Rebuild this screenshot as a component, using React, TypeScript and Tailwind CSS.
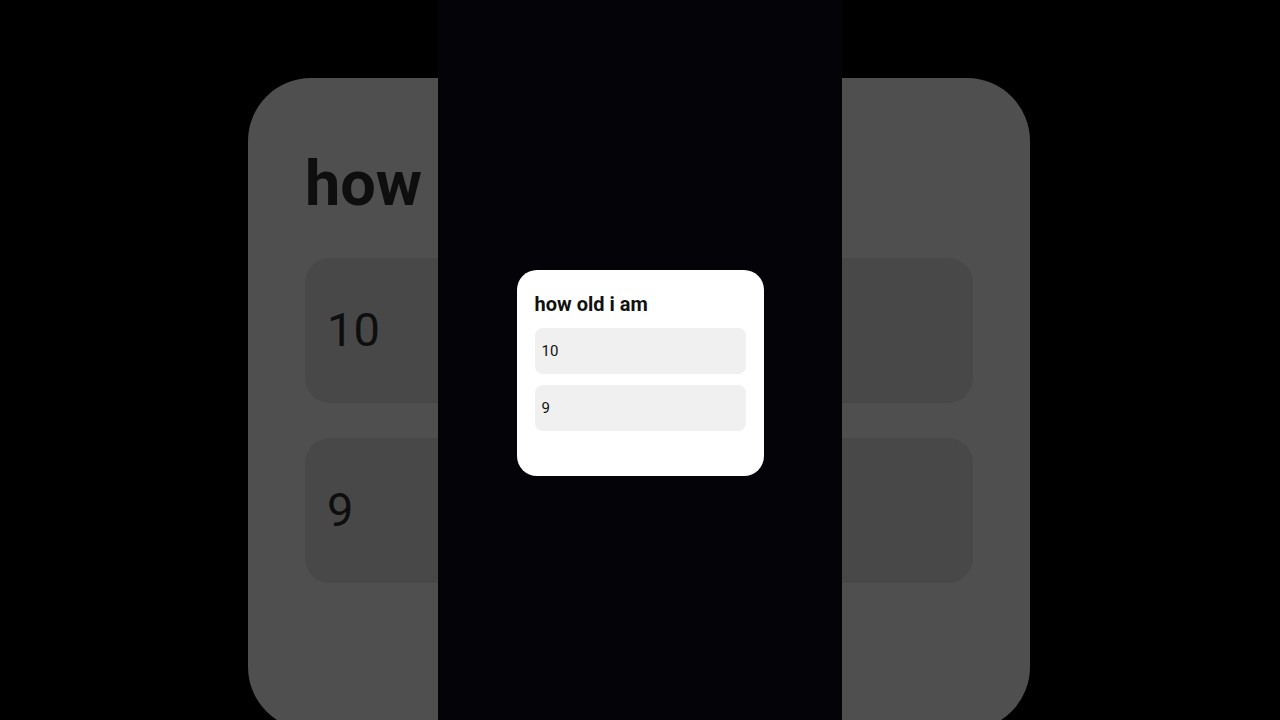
import React from "react";

export default function App() {
  return (
    <div
      className="relative flex h-screen w-screen justify-center overflow-hidden bg-black"
      style={{ fontFamily: "Roboto, 'Noto Sans', sans-serif" }}
    >
      {/* enlarged, dimmed backdrop copy of the card */}
      <div className="absolute left-[248px] top-[78px] h-[652px] w-[782px] rounded-[63px] bg-[#4f4f4f] px-[57px] pt-[63px]">
        <div className="whitespace-nowrap text-[63px] font-bold leading-[85px] text-[#0e0e0e]">
          how old i am
        </div>
        <div className="mt-[32px] flex flex-col gap-[35px]">
          <div className="flex h-[145px] items-center rounded-[25px] bg-[#484848] px-[22px] text-[47px] text-[#0e0e0e]">
            10
          </div>
          <div className="flex h-[145px] items-center rounded-[25px] bg-[#484848] px-[22px] text-[47px] text-[#0e0e0e]">
            9
          </div>
        </div>
      </div>

      {/* center phone strip */}
      <div className="relative z-10 h-full w-[404px] bg-[#040307] pt-[270px]">
        <div className="mx-auto h-[206px] w-[247px] rounded-[20px] bg-white px-[18px] pt-[21px]">
          <div className="whitespace-nowrap text-[20px] font-bold leading-[26px] text-[#111111]">
            how old i am
          </div>
          <div className="mt-[11px] flex flex-col gap-[11px]">
            <div className="flex h-[46px] items-center rounded-[8px] bg-[#f0f0f0] px-[7px] text-[15px] text-[#111111]">
              10
            </div>
            <div className="flex h-[46px] items-center rounded-[8px] bg-[#f0f0f0] px-[7px] text-[15px] text-[#111111]">
              9
            </div>
          </div>
        </div>
      </div>
    </div>
  );
}
